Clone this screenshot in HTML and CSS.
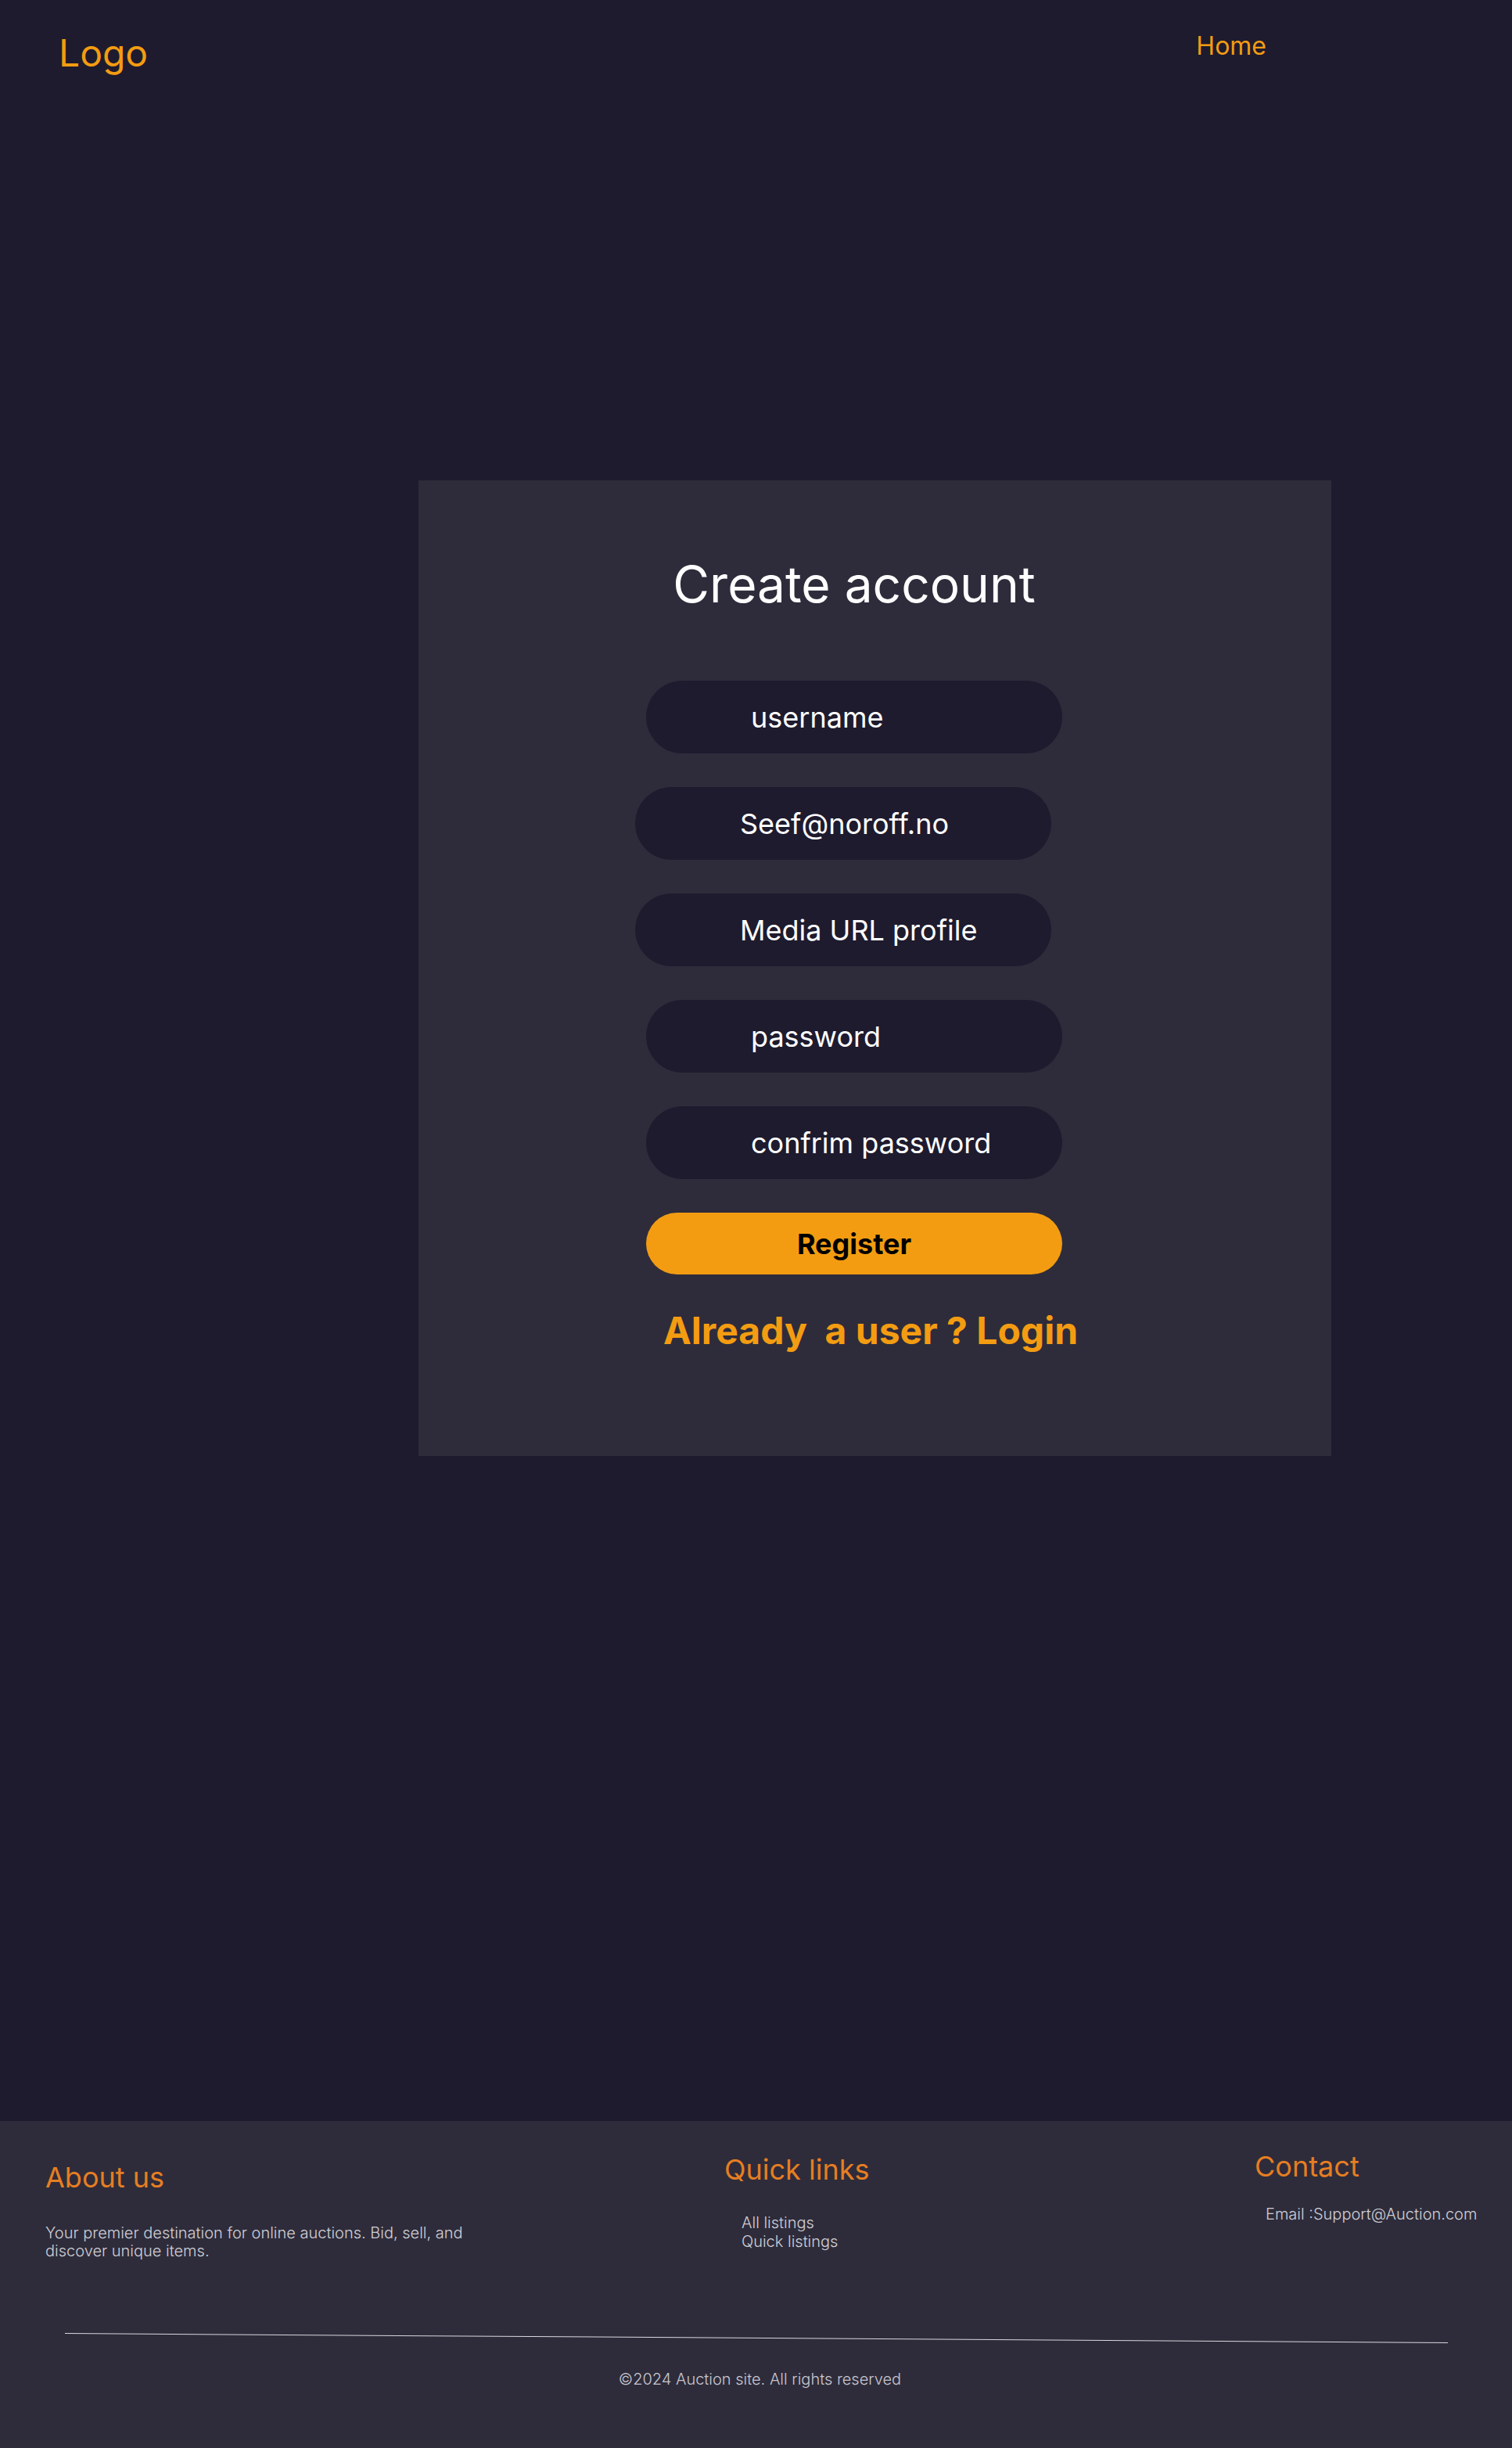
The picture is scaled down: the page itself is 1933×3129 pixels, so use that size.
FILE: index.html
```html
<!DOCTYPE html>
<html lang="en">
<head>
<meta charset="utf-8">
<title>Create account</title>
<link rel="stylesheet" href="styles.css">
</head>
<body>
<div class="page">
  <header class="site-header">
    <a class="logo" href="#">Logo</a>
    <nav class="nav"><a href="#">Home</a></nav>
  </header>
  <main class="main">
    <section class="card">
      <h1 class="card-title">Create account</h1>
      <form class="form">
        <input class="field" type="text" placeholder="username">
        <input class="field field-shift" type="email" placeholder="Seef@noroff.no">
        <input class="field field-shift" type="url" placeholder="Media URL profile">
        <input class="field" type="password" placeholder="password">
        <input class="field" type="password" placeholder="confrim password">
        <button class="register" type="button">Register</button>
        <p class="login-link">Already&nbsp; a user ? Login</p>
      </form>
    </section>
  </main>
  <footer class="site-footer">
    <div class="footer-cols">
      <div class="col col-about">
        <h2 class="col-title">About us</h2>
        <p class="col-text">Your premier destination for online auctions. Bid, sell, and discover unique items.</p>
      </div>
      <div class="col col-links">
        <h2 class="col-title">Quick links</h2>
        <ul class="links">
          <li>All listings</li>
          <li>Quick listings</li>
        </ul>
      </div>
      <div class="col col-contact">
        <h2 class="col-title">Contact</h2>
        <p class="contact-text">Email :Support@Auction.com</p>
      </div>
    </div>
    <hr class="divider">
    <p class="copyright">©2024 Auction site. All rights reserved</p>
  </footer>
</div>
</body>
</html>
```

FILE: styles.css
```css
* { box-sizing: border-box; }
html, body { margin: 0; padding: 0; }
body {
  background: #1e1b2e;
  font-family: Inter, "Noto Sans", sans-serif;
  color: #fff;
}
.page {
  min-height: 100vh;
  display: flex;
  flex-direction: column;
}
.site-header {
  display: flex;
  justify-content: space-between;
  align-items: flex-start;
  padding: 39px 314px 0 75px;
}
.logo {
  color: #f39c12;
  text-decoration: none;
  font-size: 48px;
  line-height: 58px;
  font-weight: 400;
}
.nav { margin-top: 0; }
.nav a {
  color: #f39c12;
  text-decoration: none;
  font-size: 32px;
  line-height: 40px;
}
.main {
  flex: 1;
}
.card {
  width: 1167px;
  margin: 517px 0 0 535px;
  background: #2e2c3b;
  padding: 94px 344px 131px 291px;
}
.card-title {
  margin: 0 0 84px;
  font-size: 64px;
  line-height: 78px;
  font-weight: 400;
  text-align: center;
  color: #fff;
}
.form {
  display: flex;
  flex-direction: column;
  gap: 43px;
}
.field {
  width: 532px;
  height: 93px;
  border: none;
  outline: none;
  border-radius: 47px;
  background: #1e1b2e;
  color: #fff;
  font-family: inherit;
  font-size: 36px;
  font-weight: 400;
  padding: 0 0 0 134px;
}
.field::placeholder { color: #fff; opacity: 1; }
.field-shift { margin-left: -14px; }
.register {
  width: 532px;
  height: 79px;
  border: none;
  border-radius: 40px;
  background: #f39c12;
  color: #000;
  font-family: inherit;
  font-size: 36px;
  font-weight: 700;
  padding: 0;
}
.login-link {
  margin: 0 0 0 22px;
  white-space: nowrap;
  font-size: 48px;
  line-height: 58px;
  font-weight: 700;
  color: #f39c12;
}
.site-footer {
  background: #2e2c3b;
  padding: 36px 0 76px;
}
.footer-cols {
  display: grid;
  grid-template-columns: 868px 678px 1fr;
  padding-left: 58px;
  align-items: start;
}
.col-title {
  margin: 0;
  font-size: 36px;
  line-height: 44px;
  font-weight: 400;
  color: #e67e22;
}
.col-about { margin-top: 14px; }
.col-links { margin-top: 4px; }
.col-text {
  margin: 38px 0 0;
  max-width: 560px;
  font-size: 20px;
  line-height: 23px;
  font-weight: 300;
  color: #d0cfd6;
}
.links {
  list-style: none;
  margin: 34px 0 0;
  padding: 0 0 0 22px;
  font-size: 20px;
  line-height: 24px;
  font-weight: 300;
  color: #d0cfd6;
}
.contact-text {
  margin: 27px 0 0 14px;
  font-size: 20px;
  line-height: 24px;
  font-weight: 300;
  color: #d0cfd6;
}
.divider {
  margin: 99px 82px 0 83px;
  height: 1px;
  border: none;
  background: #d8d8dc;
  transform: rotate(0.39deg);
}
.copyright {
  margin: 40px 0 0;
  text-align: center;
  font-size: 20px;
  line-height: 24px;
  font-weight: 300;
  color: #c8c7cf;
  padding-left: 10px;
}
```
